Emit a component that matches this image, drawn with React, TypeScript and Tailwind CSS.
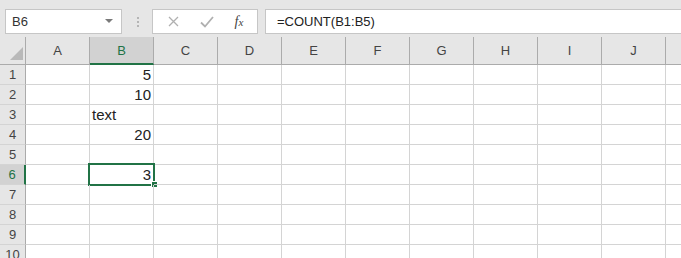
import React from 'react';

const cols = ['A', 'B', 'C', 'D', 'E', 'F', 'G', 'H', 'I', 'J', 'K'];
const rows = [1, 2, 3, 4, 5, 6, 7, 8, 9, 10];

const cells: Record<string, { v: string; align: 'left' | 'right' }> = {
  B1: { v: '5', align: 'right' },
  B2: { v: '10', align: 'right' },
  B3: { v: 'text', align: 'left' },
  B4: { v: '20', align: 'right' },
  B6: { v: '3', align: 'right' },
};

const Corner = () => (
  <svg width="14" height="14" viewBox="0 0 14 14" className="absolute left-[10px] bottom-[3px]">
    <polygon points="13,0 13,13 0,13" fill="#b9b9b9" />
  </svg>
);

export default function App() {
  return (
    <div
      className="w-[681px] h-[258px] overflow-hidden bg-white text-[#222]"
      style={{ fontFamily: '"Liberation Sans", Arial, sans-serif' }}
    >
      {/* Formula bar */}
      <div className="h-[37px] bg-[#e6e6e6] flex items-start pt-[9px]">
        <div className="ml-[5px] w-[117px] h-[25px] bg-white border border-[#c6c6c6] flex items-center pl-[6px] pr-[8px] text-[13px] text-[#333]">
          <span className="flex-1">B6</span>
          <svg width="8" height="5" viewBox="0 0 8 5">
            <polygon points="0,0 8,0 4,4" fill="#7a7a7a" />
          </svg>
        </div>
        <div className="w-[30px] h-[25px] flex flex-col items-center justify-center gap-[2px] pl-[1px]">
          <span className="w-[2px] h-[2px] bg-[#b5b5b5]" />
          <span className="w-[2px] h-[2px] bg-[#b5b5b5]" />
          <span className="w-[2px] h-[2px] bg-[#b5b5b5]" />
        </div>
        <div className="w-[106px] h-[25px] bg-white border border-[#c6c6c6] flex items-center">
          <div className="w-[38px] flex justify-center pl-[2px]">
            <svg width="11" height="11" viewBox="0 0 11 11">
              <path d="M1 1 L10 10 M10 1 L1 10" stroke="#b0b0b0" strokeWidth="1.3" />
            </svg>
          </div>
          <div className="w-[32px] flex justify-center">
            <svg width="14" height="12" viewBox="0 0 14 12">
              <path d="M1 6.5 L5 10.5 L13 1" stroke="#b0b0b0" strokeWidth="1.8" fill="none" />
            </svg>
          </div>
          <div
            className="flex-1 flex justify-center text-[14px] italic text-[#444] pr-[2px]"
            style={{ fontFamily: '"Liberation Serif", "Times New Roman", serif' }}
          >
            <span>
              f<span className="text-[11px]">x</span>
            </span>
          </div>
        </div>
        <div className="ml-[7px] flex-1 h-[25px] bg-white border border-[#c6c6c6] border-r-0 flex items-center pl-[11px] text-[13px] text-[#222]">
          =COUNT(B1:B5)
        </div>
      </div>

      {/* Sheet grid */}
      <div className="grid grid-cols-[26px_repeat(11,64px)] grid-rows-[28px_repeat(10,20px)]">
        <div className="relative bg-[#e6e6e6] border-r border-b border-[#ababab]">
          <Corner />
        </div>
        {cols.map((c) => (
          <div
            key={c}
            className={
              c === 'B'
                ? 'bg-[#d2d2d2] border-r border-[#ababab] border-b-2 border-b-[#217346] flex items-center justify-center text-[13px] text-[#217346]'
                : 'bg-[#e6e6e6] border-r border-b border-[#ababab] flex items-center justify-center text-[13px] text-[#444]'
            }
          >
            {c !== 'K' && <span className="mt-[1px]">{c}</span>}
          </div>
        ))}
        {rows.map((r) => (
          <React.Fragment key={r}>
            <div
              className={
                r === 6
                  ? 'bg-[#d2d2d2] border-r-2 border-r-[#217346] border-b border-b-[#d4d4d4] flex items-center justify-center text-[13px] text-[#217346]'
                  : 'bg-[#e6e6e6] border-r border-b border-r-[#ababab] border-b-[#d4d4d4] flex items-center justify-center text-[13px] text-[#444]'
              }
            >
              {r}
            </div>
            {cols.map((c) => {
              const id = `${c}${r}`;
              const cell = cells[id];
              const selected = id === 'B6';
              return (
                <div
                  key={id}
                  className={`relative border-r border-b border-[#d4d4d4] flex items-end text-[15px] leading-[18px] ${
                    cell?.align === 'right' ? 'justify-end pr-[2px]' : 'justify-start pl-[2px]'
                  }`}
                >
                  {cell && <span>{cell.v}</span>}
                  {selected && (
                    <>
                      <div className="absolute left-[-2px] top-[-2px] w-[67px] h-[23px] border-2 border-[#217346] pointer-events-none" />
                      <div className="absolute left-[61px] top-[16px] w-[7px] h-[7px] bg-[#217346] border border-white" />
                    </>
                  )}
                </div>
              );
            })}
          </React.Fragment>
        ))}
      </div>
    </div>
  );
}
